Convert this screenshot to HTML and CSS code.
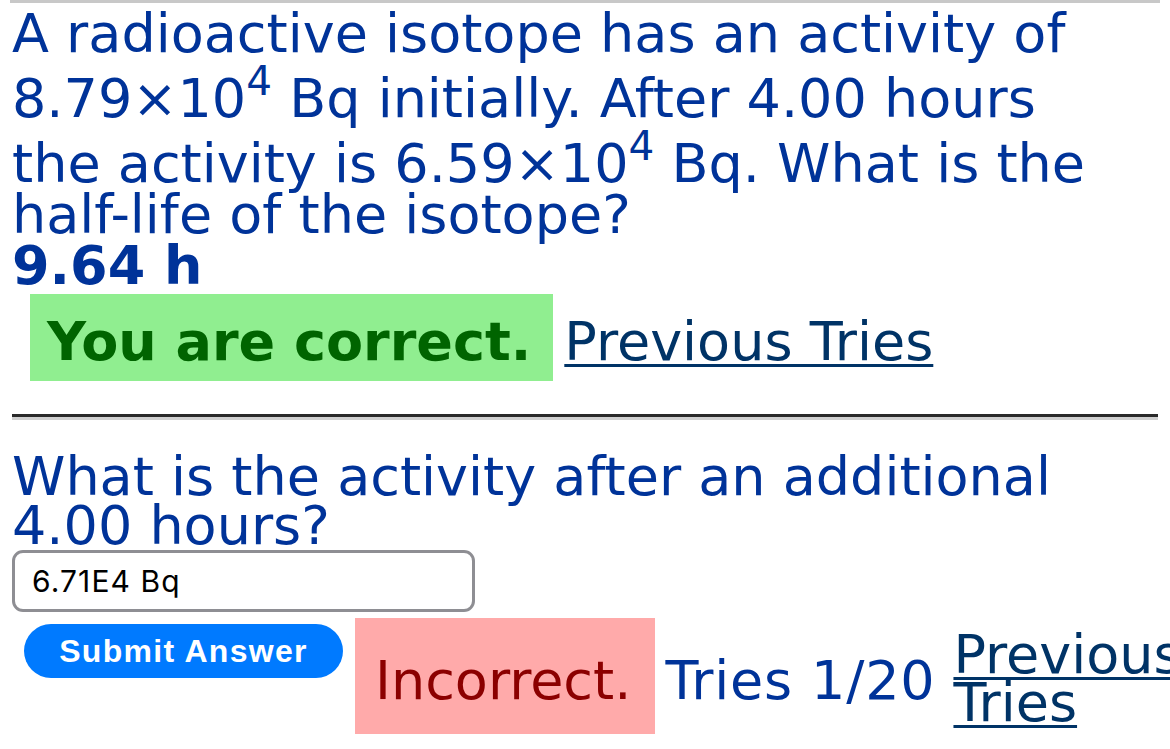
FILE: index.html
```html
<!DOCTYPE html>
<html lang="en">
  <head>
    <meta charset="UTF-8">
    <title>Problem</title>
    <link rel="stylesheet" href="styles.css">
  </head>
  <body>
    <div class="topline"></div>
    <div id="main">
      <div class="part">
        <p class="question">A radioactive isotope has an activity of 8.79&times;10<sup>4</sup> Bq initially. After 4.00 hours the activity is 6.59&times;10<sup>4</sup> Bq. What is the half-life of the isotope?</p>
        <div class="answer">9.64 h</div>
        <div class="status_row">
          <div class="correct">You are correct.</div>
          <a href="#" class="prev_link">Previous Tries</a>
        </div>
      </div>
      <hr class="divider">
      <div class="part">
        <p class="question question_two">What is the activity after an additional 4.00 hours?</p>
        <input type="text" class="answer_input" value="6.71E4 Bq">
        <div class="submit_row">
          <button class="submit">Submit Answer</button>
          <div class="incorrect">Incorrect.</div>
          <div class="tries">Tries 1/20</div>
          <a href="#" class="prev_link prev_wrap">Previous Tries</a>
        </div>
      </div>
    </div>
  </body>
</html>
```

FILE: styles.css
```css
html, body {
  margin: 0;
  padding: 0;
  overflow: hidden;
  background-color: #fff;
}
body {
  font-family: "DejaVu Sans", Verdana, sans-serif;
  font-size: 54px;
  line-height: 51px;
  color: #003399;
}
.topline {
  height: 3px;
  margin-left: 10px;
  width: 1150px;
  background-color: #c8c8c8;
}
#main {
  padding-left: 12px;
  width: 1125px;
}
.question {
  margin: 0;
  padding-top: 5px;
}
sup {
  font-size: 0.75em;
  line-height: 44px;
  vertical-align: 22px;
}
.answer {
  font-weight: bold;
}
.status_row {
  display: flex;
  align-items: baseline;
  gap: 11px;
  margin-top: 3px;
  margin-left: 18px;
}
.correct {
  background-color: #90ee90;
  color: #006400;
  font-weight: bold;
  padding: 22px 22px 14px 17px;
}
.prev_link {
  color: #003366;
  text-decoration: underline;
  text-decoration-thickness: 3px;
  text-underline-offset: 4px;
  white-space: nowrap;
}
.divider {
  margin: 33px 0 0 0;
  width: 1146px;
  height: 0;
  border: none;
  border-top: 3px solid #2a2a2a;
  border-bottom: 3px solid #d0d0d0;
}
.question_two {
  padding-top: 32px;
  line-height: 49px;
}
.answer_input {
  display: block;
  box-sizing: border-box;
  width: 463px;
  height: 62px;
  margin: 0;
  padding: 0 17px;
  border: 3px solid #8e8e93;
  border-radius: 11px;
  font-family: Inter, "Liberation Sans", Arial, sans-serif;
  font-size: 30px;
  letter-spacing: 1.1px;
  color: #000;
  background: #fff;
}
.submit_row {
  display: flex;
  align-items: stretch;
  margin-top: 6px;
}
.submit_row > * {
  flex-shrink: 0;
}
.submit {
  align-self: flex-start;
  box-sizing: border-box;
  margin: 6px 12px 0 12px;
  width: 319px;
  height: 54px;
  padding: 0;
  border: none;
  border-radius: 27px;
  background-color: #007aff;
  color: #fff;
  font-family: "Liberation Sans", Arial, sans-serif;
  font-weight: bold;
  font-size: 32px;
  letter-spacing: 1.3px;
}
.incorrect {
  display: flex;
  align-items: center;
  padding: 8px 24px 0 20px;
  background-color: #ffaaaa;
  color: #8b0000;
}
.tries {
  align-self: center;
  white-space: nowrap;
  letter-spacing: 0.8px;
  padding: 8px 18px 0 10px;
}
.prev_wrap {
  align-self: center;
  width: 240px;
  white-space: normal;
  line-height: 48px;
  padding: 13px 0 7px 0;
}
```
